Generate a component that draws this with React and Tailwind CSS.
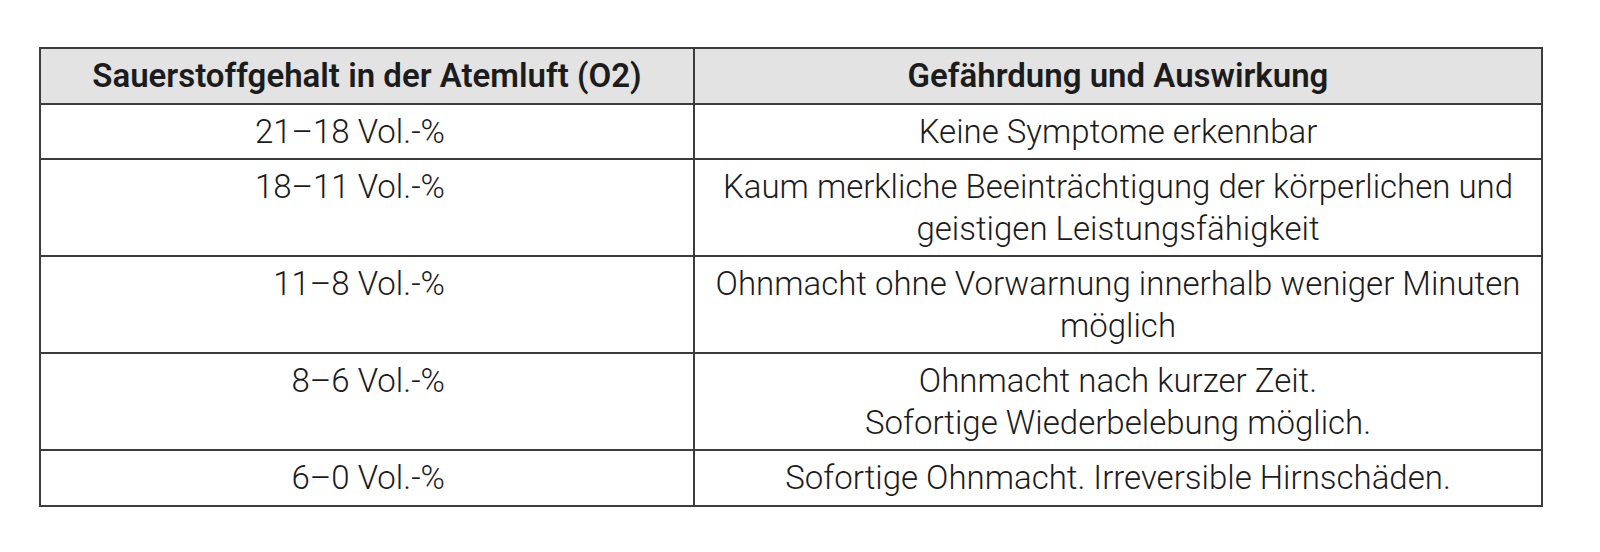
import React from 'react';

const rows = [
    { range: '21–18 Vol.-%', effect: ['Keine Symptome erkennbar'] },
    {
        range: '18–11 Vol.-%',
        effect: ['Kaum merkliche Beeinträchtigung der körperlichen und', 'geistigen Leistungsfähigkeit']
    },
    { range: '11–8 Vol.-%', effect: ['Ohnmacht ohne Vorwarnung innerhalb weniger Minuten', 'möglich'] },
    { range: '8–6 Vol.-%', effect: ['Ohnmacht nach kurzer Zeit.', 'Sofortige Wiederbelebung möglich.'] },
    { range: '6–0 Vol.-%', effect: ['Sofortige Ohnmacht. Irreversible Hirnschäden.'] }
];

const App = () => {
    return (
        <div className="w-full min-h-screen bg-white pt-[47px] pl-[39px] font-['Roboto',sans-serif] text-[#1c1c1c]">
            <table className="w-[1504px] border-collapse border-2 border-[#3c3c3c] text-[33px] leading-[41.5px]">
                <thead>
                    <tr className="bg-[#e3e3e3]">
                        <th className="w-[654px] border-2 border-[#3c3c3c] px-2 py-[6px] font-semibold whitespace-nowrap">
                            Sauerstoffgehalt in der Atemluft (O2)
                        </th>
                        <th className="border-2 border-[#3c3c3c] px-2 py-[6px] font-semibold">
                            Gefährdung und Auswirkung
                        </th>
                    </tr>
                </thead>
                <tbody>
                    {rows.map((row, i) => (
                        <tr key={i}>
                            <td className="border-2 border-[#3c3c3c] py-[6px] pr-[248px] text-right align-top font-light whitespace-nowrap">
                                {row.range}
                            </td>
                            <td className="border-2 border-[#3c3c3c] px-2 py-[6px] text-center align-top font-light">
                                {row.effect.map((line, j) => (
                                    <div key={j} className="whitespace-nowrap">{line}</div>
                                ))}
                            </td>
                        </tr>
                    ))}
                </tbody>
            </table>
        </div>
    );
};

export default App;
